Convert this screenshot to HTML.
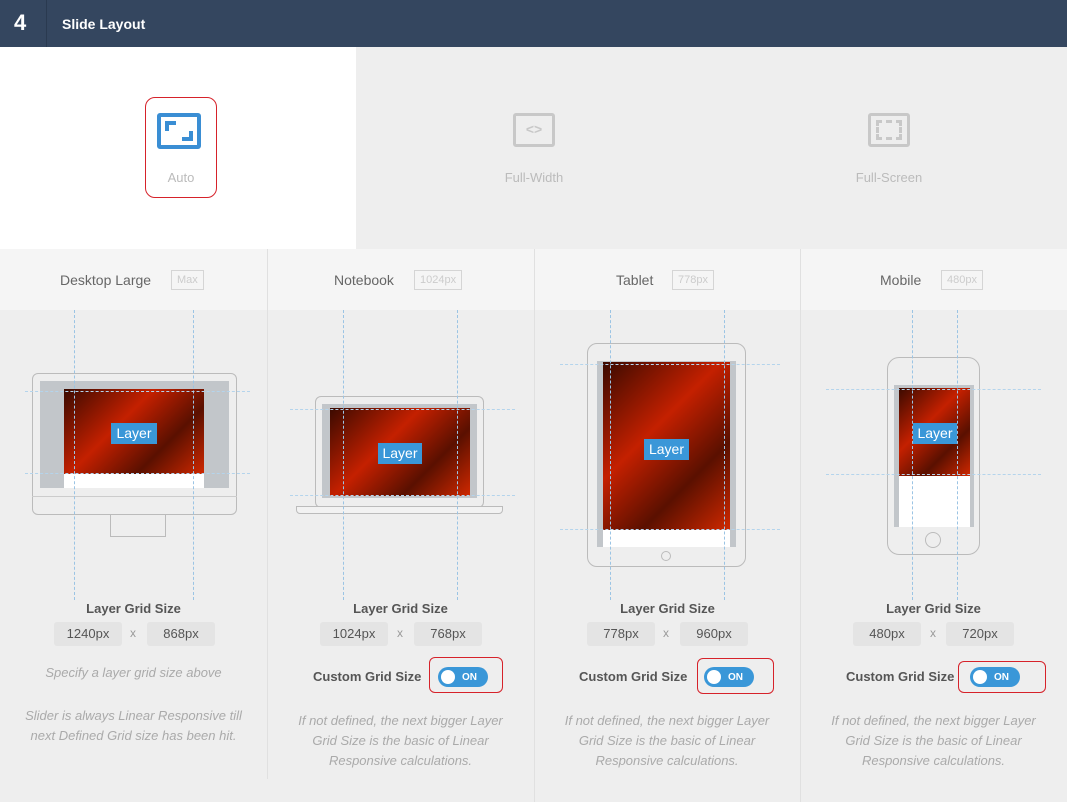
<html><head><style>
*{margin:0;padding:0;box-sizing:border-box}
body{width:1067px;height:802px;background:#eee;font-family:"Liberation Sans",sans-serif;position:relative;overflow:hidden}
.a{position:absolute}
.hdr{left:0;top:0;width:1067px;height:47px;background:#34465f}
.c{text-align:center}
.lbl{font-size:13px;color:#bbb}
.ttl{font-size:14px;color:#666}
.tag{font-size:11px;color:#ccc;border:1px solid #d5d5d5;height:20px;line-height:18px;padding:0 5px}
.in{background:#e4e4e4;border-radius:3px;height:24px;line-height:24px;font-size:13px;color:#555;text-align:center;width:68px}
.gs{font-size:13px;color:#555;font-weight:bold;width:267px;text-align:center}
.it{font-size:13px;color:#aaa;font-style:italic;text-align:center;line-height:20px}
.red{background:linear-gradient(135deg,#3a0a00,#c42000 40%,#5a1000 70%,#d02800)}
.lay{background:#3a97d8;color:#fff;font-size:14px;text-align:center;line-height:21px}
.out{border:1px solid #bbb;border-radius:6px}
.vl{width:0;border-left:1px dashed #9bc4e4}
.hl{height:0;border-top:1px dashed #b4d4ec}
.tg{width:50px;height:20px;border-radius:10px;background:#3a97d8}
.tg:before{content:"";position:absolute;left:3px;top:3px;width:14px;height:14px;border-radius:50%;background:#fff}
.tg span{position:absolute;left:24px;top:5px;font-size:10px;color:#fff;font-weight:bold}
.box{border:1px solid #d6222a;border-radius:6px}
</style></head><body>
<div class="a hdr"></div>
<div class="a" style="left:46px;top:0;width:1px;height:47px;background:#2a3a50"></div>
<div class="a" style="left:14px;top:10px;color:#fff;font-weight:bold;font-size:22px">4</div>
<div class="a" style="left:62px;top:16px;color:#fff;font-weight:bold;font-size:14px">Slide Layout</div>
<div class="a" style="left:0;top:47px;width:356px;height:202px;background:#fff"></div>
<div class="a box" style="left:145px;top:97px;width:72px;height:101px;border-radius:10px"></div>
<div class="a" style="left:157px;top:113px;width:44px;height:36px;border:4px solid #3a8ed4;border-radius:3px"></div>
<div class="a" style="left:165px;top:121px;width:11px;height:10px;border-left:4px solid #3a8ed4;border-top:4px solid #3a8ed4"></div>
<div class="a" style="left:182px;top:131px;width:11px;height:10px;border-right:4px solid #3a8ed4;border-bottom:4px solid #3a8ed4"></div>
<div class="a lbl c" style="left:145px;top:170px;width:72px">Auto</div>
<div class="a" style="left:513px;top:113px;width:42px;height:34px;border:3px solid #c8c8c8;border-radius:3px;color:#c8c8c8;font-size:14px;font-weight:bold;text-align:center;line-height:26px">&lt;&gt;</div>
<div class="a lbl c" style="left:434px;top:170px;width:200px">Full-Width</div>
<div class="a" style="left:868px;top:113px;width:42px;height:34px;border:3px solid #c8c8c8;border-radius:3px"></div>
<div class="a" style="left:876px;top:120px;width:26px;height:20px;border:3px dashed #c8c8c8"></div>
<div class="a lbl c" style="left:789px;top:170px;width:200px">Full-Screen</div>
<div class="a" style="left:0;top:249px;width:1067px;height:61px;background:#f5f5f5"></div>
<div class="a" style="left:267px;top:249px;width:1px;height:530px;background:#e0e0e0"></div>
<div class="a" style="left:534px;top:249px;width:1px;height:553px;background:#e0e0e0"></div>
<div class="a" style="left:800px;top:249px;width:1px;height:553px;background:#e0e0e0"></div>
<div class="a ttl" style="left:60px;top:272px">Desktop Large</div><div class="a tag" style="left:171px;top:270px">Max</div>
<div class="a ttl" style="left:334px;top:272px">Notebook</div><div class="a tag" style="left:414px;top:270px">1024px</div>
<div class="a ttl" style="left:616px;top:272px">Tablet</div><div class="a tag" style="left:672px;top:270px">778px</div>
<div class="a ttl" style="left:880px;top:272px">Mobile</div><div class="a tag" style="left:941px;top:270px">480px</div>

<div class="a out" style="left:32px;top:373px;width:205px;height:142px"></div>
<div class="a" style="left:32px;top:496px;width:205px;height:1px;background:#ccc"></div>
<div class="a" style="left:40px;top:381px;width:189px;height:107px;background:#c2c6ca"></div>
<div class="a" style="left:64px;top:474px;width:140px;height:14px;background:#fff"></div>
<div class="a red" style="left:64px;top:389px;width:140px;height:85px"></div>
<div class="a" style="left:110px;top:515px;width:56px;height:22px;border:1px solid #bbb;border-top:none"></div>
<div class="a lay" style="left:111px;top:423px;width:46px">Layer</div>
<div class="a vl" style="left:74px;top:310px;height:290px"></div><div class="a vl" style="left:193px;top:310px;height:290px"></div>
<div class="a hl" style="left:25px;top:391px;width:225px"></div><div class="a hl" style="left:25px;top:473px;width:225px"></div>

<div class="a out" style="left:315px;top:396px;width:169px;height:112px"></div>
<div class="a" style="left:322px;top:404px;width:155px;height:94px;background:#c2c6ca"></div>
<div class="a red" style="left:330px;top:408px;width:140px;height:88px"></div>
<div class="a" style="left:296px;top:506px;width:207px;height:8px;border:1px solid #bbb;border-radius:0 0 4px 4px;background:#f2f2f2"></div>
<div class="a lay" style="left:378px;top:443px;width:44px">Layer</div>
<div class="a vl" style="left:343px;top:310px;height:290px"></div><div class="a vl" style="left:457px;top:310px;height:290px"></div>
<div class="a hl" style="left:290px;top:409px;width:225px"></div><div class="a hl" style="left:290px;top:495px;width:225px"></div>

<div class="a out" style="left:587px;top:343px;width:159px;height:224px;border-radius:10px"></div>
<div class="a" style="left:597px;top:361px;width:139px;height:186px;background:#c2c6ca"></div>
<div class="a" style="left:603px;top:530px;width:127px;height:17px;background:#fff"></div>
<div class="a red" style="left:603px;top:362px;width:127px;height:168px"></div>
<div class="a" style="left:661px;top:551px;width:10px;height:10px;border:1px solid #bbb;border-radius:50%"></div>
<div class="a lay" style="left:644px;top:439px;width:45px">Layer</div>
<div class="a vl" style="left:610px;top:310px;height:290px"></div><div class="a vl" style="left:724px;top:310px;height:290px"></div>
<div class="a hl" style="left:560px;top:364px;width:220px"></div><div class="a hl" style="left:560px;top:529px;width:220px"></div>

<div class="a out" style="left:887px;top:357px;width:93px;height:198px;border-radius:12px"></div>
<div class="a" style="left:894px;top:385px;width:80px;height:142px;background:#c2c6ca"></div>
<div class="a" style="left:899px;top:476px;width:71px;height:51px;background:#fff"></div>
<div class="a red" style="left:899px;top:388px;width:71px;height:88px"></div>
<div class="a" style="left:925px;top:532px;width:16px;height:16px;border:1px solid #bbb;border-radius:50%"></div>
<div class="a lay" style="left:913px;top:423px;width:44px">Layer</div>
<div class="a vl" style="left:912px;top:310px;height:290px"></div><div class="a vl" style="left:957px;top:310px;height:290px"></div>
<div class="a hl" style="left:826px;top:389px;width:215px"></div><div class="a hl" style="left:826px;top:474px;width:215px"></div>

<div class="a gs" style="left:0;top:601px">Layer Grid Size</div>
<div class="a gs" style="left:267px;top:601px">Layer Grid Size</div>
<div class="a gs" style="left:534px;top:601px">Layer Grid Size</div>
<div class="a gs" style="left:800px;top:601px">Layer Grid Size</div>
<div class="a in" style="left:54px;top:622px">1240px</div><div class="a" style="left:130px;top:626px;color:#999;font-size:12px">x</div><div class="a in" style="left:147px;top:622px">868px</div>
<div class="a in" style="left:320px;top:622px">1024px</div><div class="a" style="left:397px;top:626px;color:#999;font-size:12px">x</div><div class="a in" style="left:414px;top:622px">768px</div>
<div class="a in" style="left:587px;top:622px">778px</div><div class="a" style="left:663px;top:626px;color:#999;font-size:12px">x</div><div class="a in" style="left:680px;top:622px">960px</div>
<div class="a in" style="left:853px;top:622px">480px</div><div class="a" style="left:930px;top:626px;color:#999;font-size:12px">x</div><div class="a in" style="left:946px;top:622px">720px</div>

<div class="a it" style="left:0;top:663px;width:267px">Specify a layer grid size above</div>
<div class="a it" style="left:0;top:706px;width:267px">Slider is always Linear Responsive till<br>next Defined Grid size has been hit.</div>

<div class="a" style="left:313px;top:669px;font-size:13px;color:#555;font-weight:bold">Custom Grid Size</div>
<div class="a box" style="left:429px;top:657px;width:74px;height:36px"></div><div class="a tg" style="left:438px;top:667px"><span>ON</span></div>
<div class="a" style="left:579px;top:669px;font-size:13px;color:#555;font-weight:bold">Custom Grid Size</div>
<div class="a box" style="left:697px;top:658px;width:77px;height:36px"></div><div class="a tg" style="left:704px;top:667px"><span>ON</span></div>
<div class="a" style="left:846px;top:669px;font-size:13px;color:#555;font-weight:bold">Custom Grid Size</div>
<div class="a box" style="left:958px;top:661px;width:88px;height:32px"></div><div class="a tg" style="left:970px;top:667px"><span>ON</span></div>

<div class="a it" style="left:267px;top:711px;width:267px">If not defined, the next bigger Layer<br>Grid Size is the basic of Linear<br>Responsive calculations.</div>
<div class="a it" style="left:534px;top:711px;width:266px">If not defined, the next bigger Layer<br>Grid Size is the basic of Linear<br>Responsive calculations.</div>
<div class="a it" style="left:800px;top:711px;width:267px">If not defined, the next bigger Layer<br>Grid Size is the basic of Linear<br>Responsive calculations.</div>
</body></html>
